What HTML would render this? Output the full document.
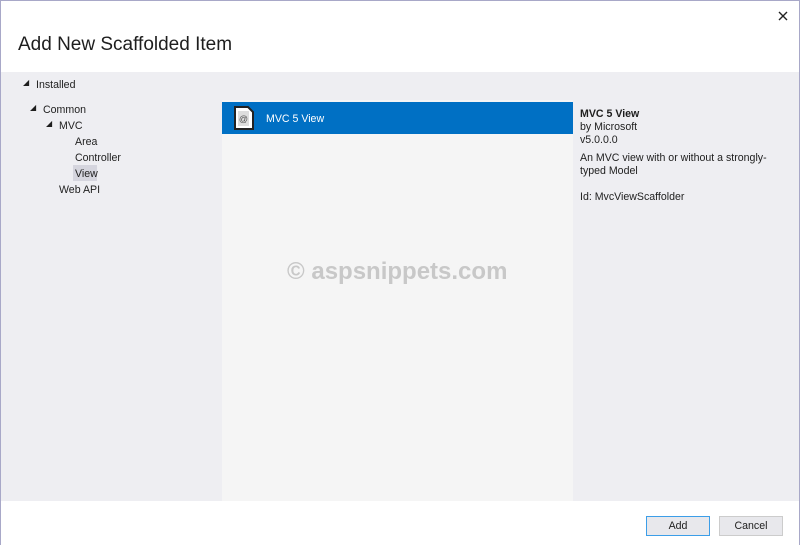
<!DOCTYPE html>
<html><head><style>
*{margin:0;padding:0;box-sizing:border-box}
body{width:800px;height:545px;overflow:hidden;background:#fff;font-family:"Liberation Sans",sans-serif;font-size:10.6px;color:#1e1e1e;position:relative}
.frame{position:absolute;left:0;top:0;width:800px;height:545px;border:1px solid #a8a8c8;border-bottom:none}
.a{position:absolute;white-space:nowrap}
</style></head><body>
<div class="a" style="left:0;top:72px;width:800px;height:429px;background:#eeeef2"></div>
<div class="a" style="left:222px;top:100px;width:351px;height:401px;background:#f5f5f5"></div>
<div class="a" style="left:222px;top:102px;width:351px;height:32px;background:#0070c4"></div>
<div class="frame"></div>
<div class="a" style="left:18px;top:34px;font-size:19px;color:#1e1e1e">Add New Scaffolded Item</div>
<svg class="a" style="left:778px;top:11px" width="10" height="10" viewBox="0 0 10 10"><path d="M1 1L9 9M9 1L1 9" stroke="#222" stroke-width="1.4"/></svg>
<div class="a" style="left:23px;top:78px;font-size:8px">◢</div>
<div class="a" style="left:36px;top:79px">Installed</div>
<div class="a" style="left:30px;top:103px;font-size:8px">◢</div>
<div class="a" style="left:43px;top:104px">Common</div>
<div class="a" style="left:46px;top:119px;font-size:8px">◢</div>
<div class="a" style="left:59px;top:120px">MVC</div>
<div class="a" style="left:75px;top:136px">Area</div>
<div class="a" style="left:75px;top:152px">Controller</div>
<div class="a" style="left:73px;top:165px;width:24px;height:16px;background:#d5d5de"></div>
<div class="a" style="left:75px;top:168px">View</div>
<div class="a" style="left:59px;top:184px">Web API</div>
<svg class="a" style="left:234px;top:106px" width="20" height="24" viewBox="0 0 20 24"><path d="M1 1h13l5 5v17H1z" fill="#fff" stroke="#222" stroke-width="2"/><rect x="4" y="5" width="11" height="15" fill="#ddd"/><text x="9.5" y="16" font-size="9" text-anchor="middle" fill="#555" font-family="Liberation Sans">@</text></svg>
<div class="a" style="left:266px;top:113px;color:#fff">MVC 5 View</div>
<div class="a" style="left:580px;top:108px;font-weight:bold">MVC 5 View</div>
<div class="a" style="left:580px;top:121px">by Microsoft</div>
<div class="a" style="left:580px;top:134px">v5.0.0.0</div>
<div class="a" style="left:580px;top:152px">An MVC view with or without a strongly-</div>
<div class="a" style="left:580px;top:165px">typed Model</div>
<div class="a" style="left:580px;top:191px">Id: MvcViewScaffolder</div>
<div class="a" style="left:287px;top:258px;font-size:24px;font-weight:bold;color:#c8c8c8">© aspsnippets.com</div>
<div class="a" style="left:646px;top:516px;width:64px;height:20px;border:1px solid #3c9ee8;background:#e8e8ec;text-align:center;line-height:18px">Add</div>
<div class="a" style="left:719px;top:516px;width:64px;height:20px;border:1px solid #ccc;background:#e8e8ec;text-align:center;line-height:18px">Cancel</div>
</body></html>
